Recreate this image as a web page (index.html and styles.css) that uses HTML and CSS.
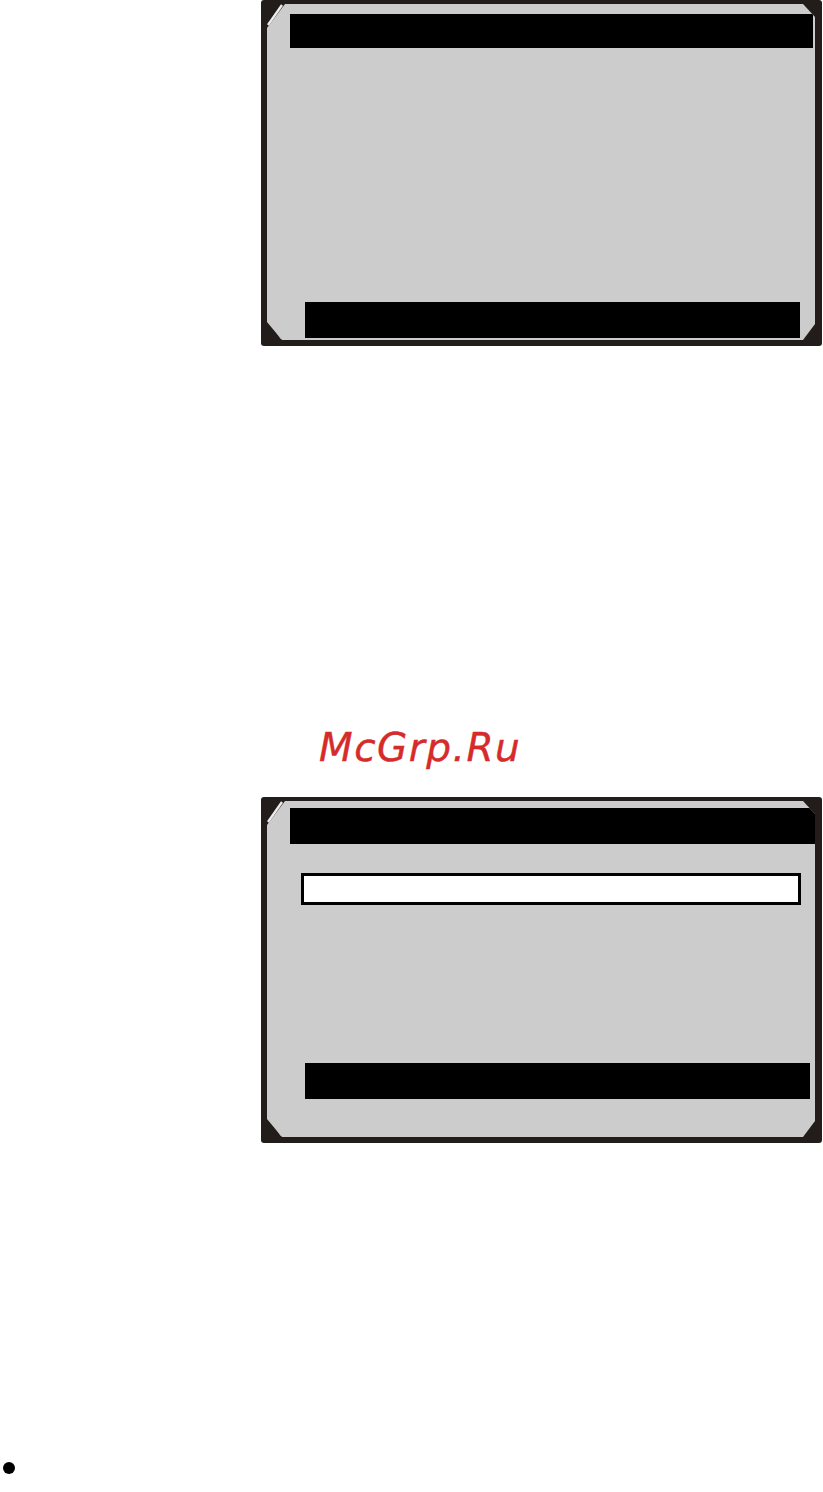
FILE: index.html
```html
<!DOCTYPE html>
<html lang="en">
<head>
<meta charset="utf-8">
<title>Screens</title>
<link rel="stylesheet" href="styles.css">
</head>
<body>
<div class="page">
  <div class="frame">
    <svg class="bevel" width="561" height="346" viewBox="0 0 561 346">
      <line x1="7" y1="25" x2="21" y2="5" stroke="#ececec" stroke-width="2.4"/>
      <line x1="7.5" y1="320" x2="20" y2="339" stroke="#8a8a8a" stroke-width="1"/>
    </svg>
    <div class="screen">
      <div class="title-bar title-one"></div>
      <div class="spacer"></div>
      <div class="status-bar status-one"></div>
    </div>
  </div>

  <div class="watermark">McGrp.Ru</div>

  <div class="frame frame-two">
    <svg class="bevel" width="561" height="346" viewBox="0 0 561 346">
      <line x1="7" y1="25" x2="21" y2="5" stroke="#ececec" stroke-width="2.4"/>
      <line x1="7.5" y1="320" x2="20" y2="339" stroke="#8a8a8a" stroke-width="1"/>
    </svg>
    <div class="screen">
      <div class="title-bar title-two"></div>
      <div class="highlight"></div>
      <div class="spacer"></div>
      <div class="status-bar status-two"></div>
    </div>
  </div>

  <div class="bullet"></div>
</div>
</body>
</html>
```

FILE: styles.css
```css
html, body {
  margin: 0;
  padding: 0;
  background: #ffffff;
}

.page {
  width: 823px;
  display: flex;
  flex-direction: column;
  align-items: flex-start;
  font-family: "DejaVu Sans", sans-serif;
}

.frame {
  position: relative;
  flex-shrink: 0;
  margin-left: 261px;
  width: 561px;
  height: 346px;
  box-sizing: border-box;
  padding: 4px 7px 6px 6px;
  background: #221d1a;
  border-radius: 3px;
  display: flex;
}

.bevel {
  position: absolute;
  left: 0;
  top: 0;
  pointer-events: none;
}

.screen {
  flex: 1;
  background: #cccccc;
  display: flex;
  flex-direction: column;
  clip-path: polygon(0 24px, 18px 0, 536px 0, 548px 13px, 548px 320px, 536px 336px, 15px 336px, 0 318px);
}

.spacer {
  flex: 1;
}

.title-bar {
  background: #000000;
}

.title-one {
  margin: 10px 2px 0 23px;
  height: 34px;
}

.status-bar {
  background: #000000;
}

.status-one {
  margin: 0 15px 2px 38px;
  height: 36px;
}

.watermark {
  flex-shrink: 0;
  margin: 379px 0 0 319px;
  font-size: 39px;
  line-height: 46px;
  font-style: italic;
  letter-spacing: 1.5px;
  color: #d52b2b;
  -webkit-text-stroke: 0.4px #d52b2b;
}

.frame-two {
  margin-top: 26px;
}

.title-two {
  margin: 7px 0 0 23px;
  height: 36px;
}

.highlight {
  margin: 29px 0 0 34px;
  width: 500px;
  height: 32px;
  box-sizing: border-box;
  border: 3px solid #000000;
  background: #ffffff;
}

.status-two {
  margin: 0 5px 38px 38px;
  height: 36px;
}

.bullet {
  flex-shrink: 0;
  margin: 319px 0 0 3px;
  width: 12px;
  height: 12px;
  border-radius: 50%;
  background: #000000;
}
```
